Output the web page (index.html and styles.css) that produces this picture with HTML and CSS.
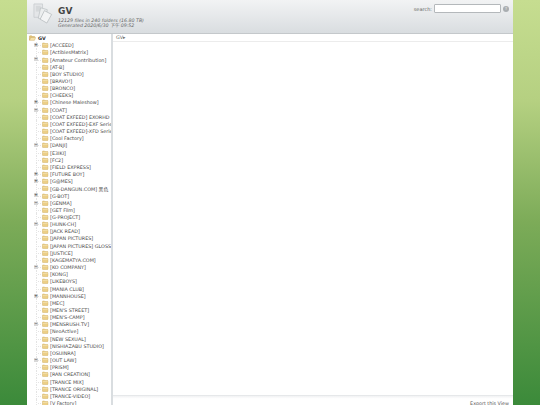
FILE: index.html
```html
<!DOCTYPE html>
<html lang="en">
<head>
<meta charset="utf-8">
<title>GV</title>
<link rel="stylesheet" href="styles.css">
</head>
<body>
<svg class="defs" width="0" height="0" aria-hidden="true">
  <symbol id="folder" viewBox="0 0 16 14">
    <path d="M1 3.5C1 2.5 1.6 2 2.4 2H6l1.4 1.6H14c.7 0 1.2.5 1.2 1.2V12c0 .8-.5 1.2-1.2 1.2H2.2C1.5 13.200 1 12.800 1 12Z" fill="#eccf86" stroke="#c9a654" stroke-width="1"/>
    <path d="M2 5.500H14.200V7H2Z" fill="#f8ecc4"/>
  </symbol>
</svg>
<main class="app">
  <header class="head">
    <svg class="logo" viewBox="0 0 22 22" aria-hidden="true">
      <path d="M1 1H10V15H1Z" fill="#e4e6e8" stroke="#c6cacd" stroke-width=".8"/>
      <path d="M3 3H8V9H3Z" fill="#d5d8da"/>
      <path d="M8 5L15 7L12.500 18L5.500 16Z" fill="#eceeef" stroke="#bcc1c4" stroke-width=".8"/>
      <path d="M12 8L19.500 12L14.500 21L7.500 17Z" fill="#f3f4f5" stroke="#b5babd" stroke-width=".8"/>
    </svg>
    <div class="info">
      <h1>GV</h1>
      <p>12129 files in 240 folders (16.80 TB)</p>
      <p>Generated 2020/6/30 下午 09:52</p>
    </div>
    <form class="search">
      <label for="q">search:</label>
      <input id="q" type="text">
      <span class="help">?</span>
    </form>
  </header>
  <div class="body">
    <nav class="tree">
      <div class="root">
        <svg class="open" viewBox="0 0 16 14" aria-hidden="true">
          <path d="M1 12V3C1 2.300 1.500 2 2 2H6L7 3.500H13V6H4Z" fill="#e6c677" stroke="#c29d4c"/>
          <path d="M1 12.500L4 6H15.500L12.500 12.500Z" fill="#f7e4ae" stroke="#c9a654"/>
        </svg>
        <b>GV</b>
      </div>
      <ul>
        <li class="plus"><i></i><svg><use href="#folder"/></svg><span>[ACCEED]</span></li>
        <li><i></i><svg><use href="#folder"/></svg><span>[ActiblesMatrix]</span></li>
        <li class="minus"><i></i><svg><use href="#folder"/></svg><span>[Amateur Contribution]</span></li>
        <li><i></i><svg><use href="#folder"/></svg><span>[AT-B]</span></li>
        <li><i></i><svg><use href="#folder"/></svg><span>[BOY STUDIO]</span></li>
        <li><i></i><svg><use href="#folder"/></svg><span>[BRAVO!]</span></li>
        <li><i></i><svg><use href="#folder"/></svg><span>[BRONCO]</span></li>
        <li><i></i><svg><use href="#folder"/></svg><span>[CHEEKS]</span></li>
        <li class="plus"><i></i><svg><use href="#folder"/></svg><span>[Chinese Maleshow]</span></li>
        <li class="minus"><i></i><svg><use href="#folder"/></svg><span>[COAT]</span></li>
        <li><i></i><svg><use href="#folder"/></svg><span>[COAT EXFEED] EXORHD</span></li>
        <li><i></i><svg><use href="#folder"/></svg><span>[COAT EXFEED]-EXF Serie</span></li>
        <li><i></i><svg><use href="#folder"/></svg><span>[COAT EXFEED]-XFD Serie</span></li>
        <li><i></i><svg><use href="#folder"/></svg><span>[Cool Factory]</span></li>
        <li class="minus"><i></i><svg><use href="#folder"/></svg><span>[DANJI]</span></li>
        <li><i></i><svg><use href="#folder"/></svg><span>[E3IKI]</span></li>
        <li><i></i><svg><use href="#folder"/></svg><span>[FC2]</span></li>
        <li><i></i><svg><use href="#folder"/></svg><span>[FIELD EXPRESS]</span></li>
        <li class="plus"><i></i><svg><use href="#folder"/></svg><span>[FUTURE BOY]</span></li>
        <li class="plus"><i></i><svg><use href="#folder"/></svg><span>[G@MES]</span></li>
        <li><i></i><svg><use href="#folder"/></svg><span>[GB-DANGUN.COM] 黑色</span></li>
        <li class="plus"><i></i><svg><use href="#folder"/></svg><span>[G-BOT]</span></li>
        <li class="minus"><i></i><svg><use href="#folder"/></svg><span>[GENMA]</span></li>
        <li><i></i><svg><use href="#folder"/></svg><span>[GET Film]</span></li>
        <li><i></i><svg><use href="#folder"/></svg><span>[G-PROJECT]</span></li>
        <li class="minus"><i></i><svg><use href="#folder"/></svg><span>[HUNK-CH]</span></li>
        <li><i></i><svg><use href="#folder"/></svg><span>[JACK READ]</span></li>
        <li><i></i><svg><use href="#folder"/></svg><span>[JAPAN PICTURES]</span></li>
        <li><i></i><svg><use href="#folder"/></svg><span>[JAPAN PICTURES] GLOSS</span></li>
        <li><i></i><svg><use href="#folder"/></svg><span>[JUSTICE]</span></li>
        <li><i></i><svg><use href="#folder"/></svg><span>[KAGEMATYA.COM]</span></li>
        <li class="minus"><i></i><svg><use href="#folder"/></svg><span>[KO COMPANY]</span></li>
        <li><i></i><svg><use href="#folder"/></svg><span>[KONG]</span></li>
        <li><i></i><svg><use href="#folder"/></svg><span>[LIKEBOYS]</span></li>
        <li><i></i><svg><use href="#folder"/></svg><span>[MANIA CLUB]</span></li>
        <li class="plus"><i></i><svg><use href="#folder"/></svg><span>[MANNHOUSE]</span></li>
        <li><i></i><svg><use href="#folder"/></svg><span>[MEC]</span></li>
        <li><i></i><svg><use href="#folder"/></svg><span>[MEN'S STREET]</span></li>
        <li><i></i><svg><use href="#folder"/></svg><span>[MEN'S-CAMP]</span></li>
        <li class="minus"><i></i><svg><use href="#folder"/></svg><span>[MENSRUSH.TV]</span></li>
        <li><i></i><svg><use href="#folder"/></svg><span>[NeoActive]</span></li>
        <li><i></i><svg><use href="#folder"/></svg><span>[NEW SEXUAL]</span></li>
        <li><i></i><svg><use href="#folder"/></svg><span>[NISHIAZABU STUDIO]</span></li>
        <li><i></i><svg><use href="#folder"/></svg><span>[OSUINRA]</span></li>
        <li class="minus"><i></i><svg><use href="#folder"/></svg><span>[OUT LAW]</span></li>
        <li><i></i><svg><use href="#folder"/></svg><span>[PRISM]</span></li>
        <li><i></i><svg><use href="#folder"/></svg><span>[RAN CREATION]</span></li>
        <li><i></i><svg><use href="#folder"/></svg><span>[TRANCE MIX]</span></li>
        <li><i></i><svg><use href="#folder"/></svg><span>[TRANCE ORIGINAL]</span></li>
        <li><i></i><svg><use href="#folder"/></svg><span>[TRANCE-VIDEO]</span></li>
        <li><i></i><svg><use href="#folder"/></svg><span>[V Factory]</span></li>
      </ul>
    </nav>
    <section class="content">
      <div class="crumb">GV▸</div>
      <div class="view"></div>
      <div class="foot">Export this View</div>
    </section>
  </div>
</main>
</body>
</html>
```
FILE: styles.css
```css
* { box-sizing: border-box; }
html, body { height: 100%; }
body {
  margin: 0;
  overflow: hidden;
  background: linear-gradient(180deg, #c6dd90 0%, #b5d081 25%, #7cab58 55%, #3b8a3a 100%);
  font-family: "DejaVu Sans", "Noto Sans CJK TC", sans-serif;
  color: #444;
}
.defs { position: absolute; }
.app {
  width: 486px;
  height: 405px;
  margin: 0 27px;
  display: flex;
  flex-direction: column;
  background: #fff;
}
.head {
  height: 34px;
  flex: none;
  display: flex;
  align-items: flex-start;
  padding: 3px 4px 0 6px;
  background: linear-gradient(180deg, #f2f3f4 0%, #d9dde0 100%);
  border-bottom: 1px solid #c4c8cb;
}
.logo { width: 21px; height: 21px; flex: none; }
.info { margin-left: 4px; flex: 1; }
.info h1 { margin: 3px 0 1px; font-size: 9px; line-height: 11px; color: #444; }
.info p { margin: 0; font-size: 4.700px; line-height: 5px; font-style: italic; color: #666; }
.search { display: flex; align-items: center; gap: 2px; margin-top: 1px; font-size: 5px; color: #666; }
.search input {
  width: 67px; height: 9px; padding: 0; margin: 0;
  border: 1px solid #b4b8bb; border-radius: 1px; background: #fff;
}
.help {
  width: 6px; height: 6px; border-radius: 50%;
  background: #a9adb0; color: #eee;
  font-size: 4px; line-height: 6px; text-align: center;
}
.body { flex: 1; min-height: 0; display: flex; }
.tree {
  width: 86px;
  flex: none;
  overflow: hidden;
  background: #fff;
  border-right: 2px solid #d9dde0;
  font-size: 4.850px;
  color: #4a4a4a;
}
.root {
  height: 7.160px;
  margin-top: 0.500px;
  display: flex;
  align-items: center;
  padding-left: 2px;
  white-space: nowrap;
}
.open { width: 7px; height: 6px; flex: none; }
.root b { margin-left: 2px; color: #333; }
.tree ul { margin: 0; padding: 0; list-style: none; }
.tree li {
  position: relative;
  height: 7.160px;
  display: flex;
  align-items: center;
  padding-left: 15px;
  white-space: nowrap;
}
.tree li::before {
  content: "";
  position: absolute;
  left: 9px; top: 0; bottom: 0;
  border-left: 1px dotted #e4e4e4;
}
.tree li i {
  position: absolute;
  left: 11px; width: 3px; top: 50%;
  border-top: 1px dotted #e4e4e4;
}
.tree li svg { width: 6.500px; height: 6px; flex: none; }
.tree li span { margin-left: 1.500px; }
.plus::after, .minus::after {
  position: absolute;
  left: 7px; top: 1.500px;
  width: 4px; height: 4px;
  background: #d8d8d8;
  color: #444;
  font-size: 4px;
  line-height: 4px;
  text-align: center;
  font-weight: bold;
}
.plus::after { content: "+"; }
.minus::after { content: "−"; }
.content { flex: 1; min-width: 0; display: flex; flex-direction: column; }
.crumb {
  height: 8px;
  flex: none;
  padding: 1px 0 0 3px;
  font-size: 4.800px;
  line-height: 6px;
  color: #666;
  border-bottom: 1px solid #ececec;
}
.view { flex: 1; }
.foot {
  height: 10px;
  flex: none;
  padding: 4.500px 4px 0 0;
  text-align: right;
  font-size: 4.800px;
  line-height: 6px;
  color: #555;
  background: linear-gradient(180deg, #f1f2f3 0, #fff 30%);
  border-top: 1px solid #e6e8ea;
}
```
